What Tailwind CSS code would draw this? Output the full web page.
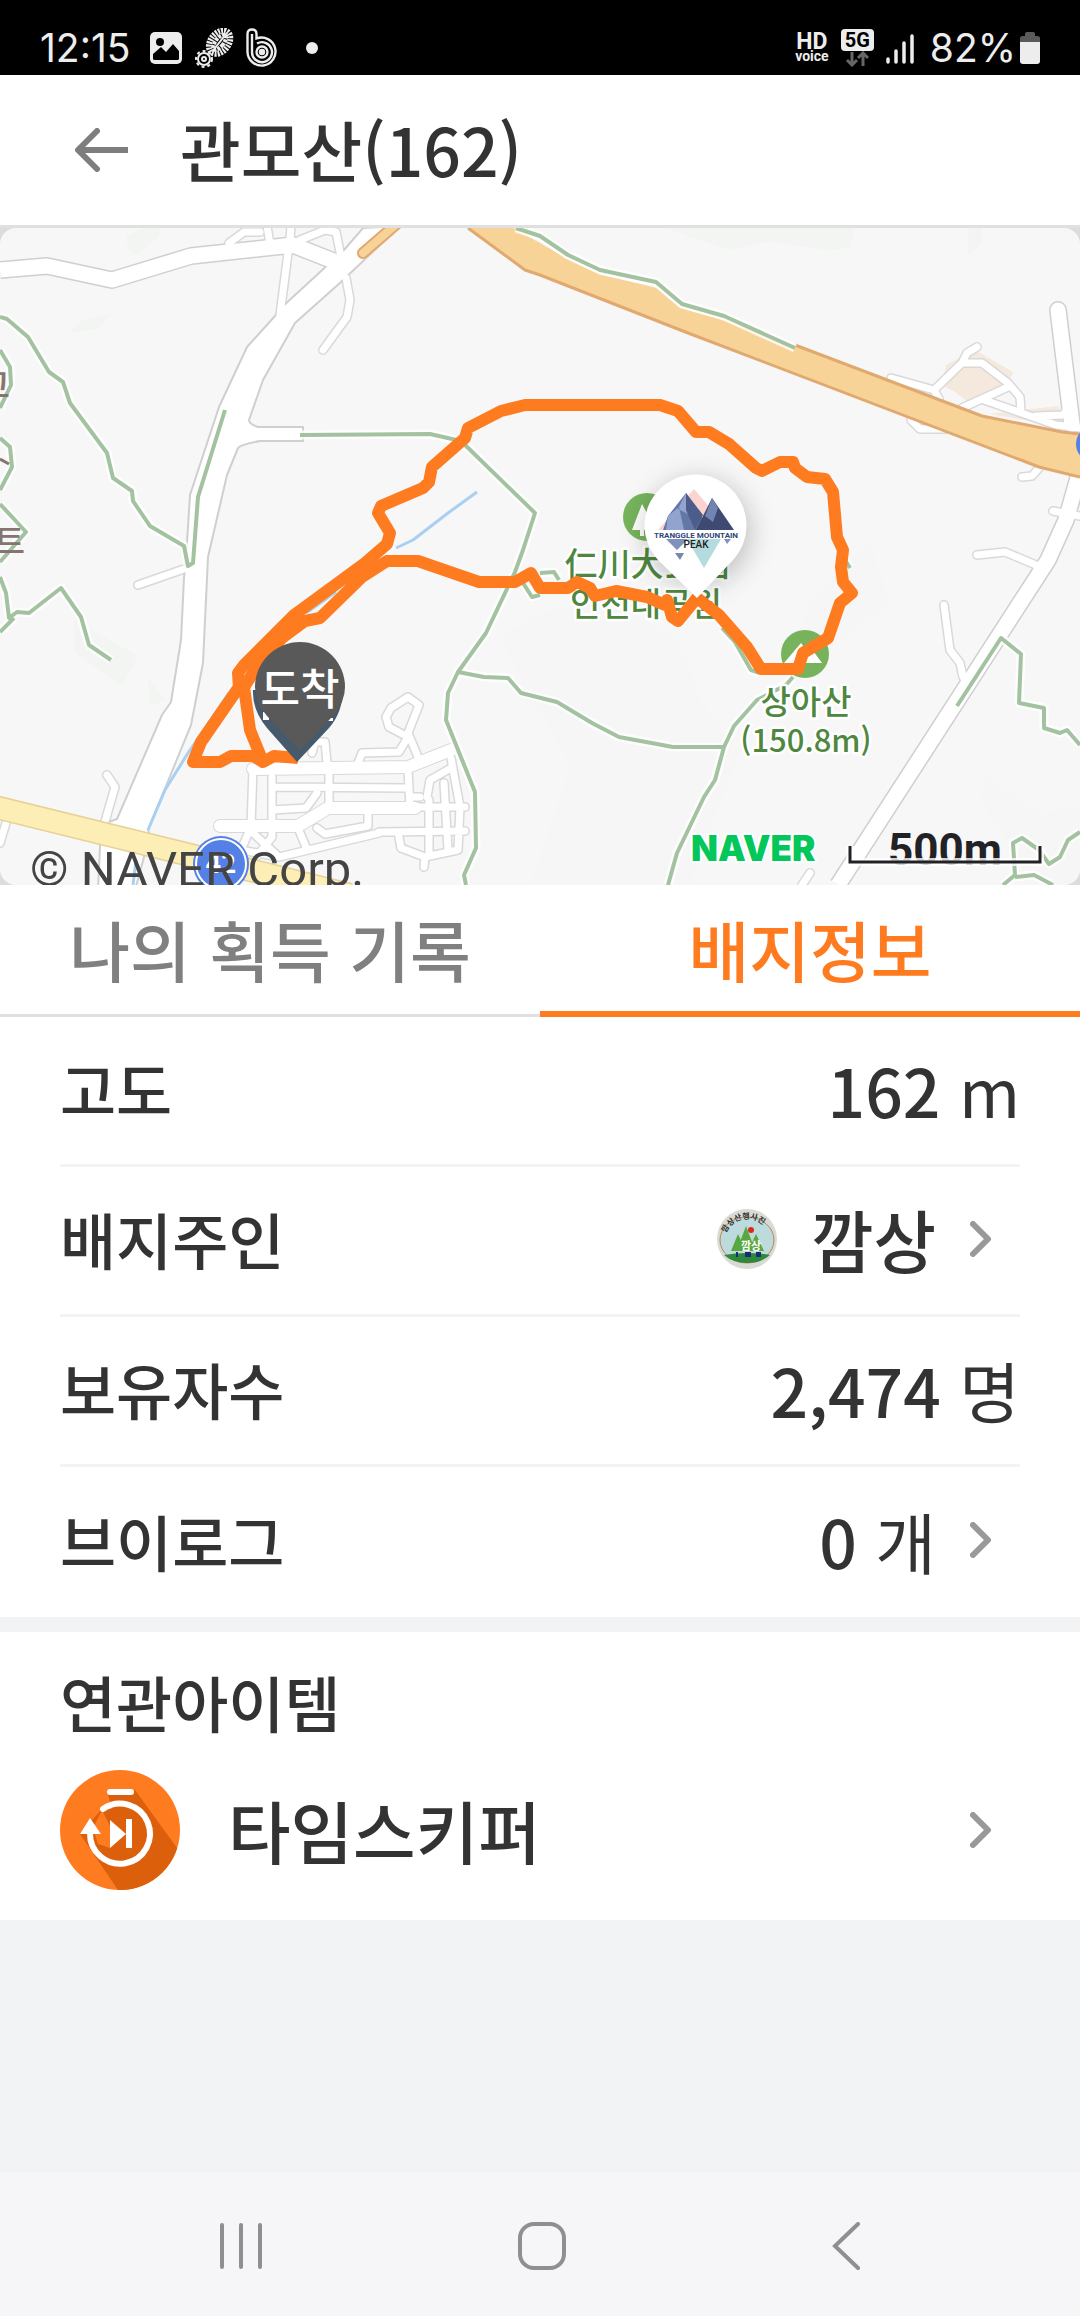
<!DOCTYPE html>
<html lang="ko">
<head>
    <meta charset="UTF-8">
    <meta name="viewport" content="width=device-width, initial-scale=1.0">
    <title>관모산(162)</title>
    <script src="https://cdn.jsdelivr.net/npm/@tailwindcss/browser@4"></script>
</head>
<body class="flex min-h-screen flex-col bg-[#f1f3f5] font-['Noto_Sans_CJK_KR',sans-serif] text-[#333333]">

    <!-- Status bar -->
    <div class="flex h-[75px] items-center justify-between bg-black pt-5 pr-10 pl-10 font-['Inter',sans-serif] text-[39px] leading-none text-[#ededed]">
        <div class="flex items-center">
            <span class="mr-5">12:15</span>
            <svg class="mr-3 h-8 w-8" viewBox="0 0 32 32">
                <rect width="32" height="32" rx="5" fill="#ededed"/>
                <circle cx="10" cy="10" r="4"/>
                <path d="M3 27v-5l8-7 5 5 7-8 6 7v8q0 1-2 1H5q-2 0-2-1z"/>
            </svg>
            <svg class="mr-3 h-10 w-10" viewBox="0 0 40 40" fill="none" stroke="#ededed">
                <g transform="rotate(38 25 15)">
                    <ellipse cx="25" cy="14" rx="9" ry="13" stroke-width="6" stroke-dasharray="2 1"/>
                    <ellipse cx="25" cy="14" rx="4" ry="9" stroke-width="4" stroke-dasharray="3 1"/>
                    <path d="M25 2v24" stroke-width="2"/>
                </g>
                <circle cx="10" cy="31" r="6" stroke-width="2"/>
                <circle cx="10" cy="31" r="8" stroke-width="2" stroke-dasharray="3 3"/>
                <circle cx="10" cy="31" r="2" stroke-width="2"/>
            </svg>
            <svg class="mr-7 h-10 w-8" viewBox="0 0 32 40" fill="none" stroke="#ededed" stroke-width="2.4">
                <path d="M1.500 24V6q0-4.500 4.500-4.500T10.500 6v4.500A14 14 0 1 1 1.500 24z"/>
                <path d="M6 24V6M6 24a10 10 0 1 0 5-8.500"/>
                <circle cx="16" cy="24" r="5.500"/>
                <circle cx="16" cy="24" r="2" fill="#ededed"/>
            </svg>
            <span class="h-3 w-3 rounded-full bg-[#ededed]"></span>
        </div>
        <div class="flex items-center">
            <div class="mr-3 text-center font-['Roboto',sans-serif] font-bold">
                <div class="text-[23px] leading-4">HD</div>
                <div class="text-[14px] leading-3">voice</div>
            </div>
            <div class="mr-3 flex flex-col items-center">
                <span class="rounded-sm bg-[#ededed] px-1 font-['Roboto',sans-serif] text-[20px] leading-[22px] font-bold text-black">5G</span>
                <svg class="h-4 w-6" viewBox="0 0 24 16" fill="none" stroke="#666" stroke-width="3"><path d="M7 1v13M2 9l5 5 5-5M18 15V2M13 7l5-5 5 5"/></svg>
            </div>
            <svg class="mr-4 h-8 w-7" viewBox="0 0 28 32" stroke="#ededed" stroke-width="3.500" stroke-linecap="round"><path d="M2 27v3M10 19v11M18 11v19M26 4v26"/></svg>
            <span class="mr-1">82%</span>
            <svg class="h-8 w-5" viewBox="0 0 20 32">
                <path d="M0 10V6q0-2 3-2h2V2q0-2 2-2h6q2 0 2 2v2h2q3 0 3 2v4z" fill="#5a5a5a"/>
                <path d="M0 10h20v19q0 3-3 3H3q-3 0-3-3z" fill="#ededed"/>
            </svg>
        </div>
    </div>

    <!-- Title bar -->
    <header class="flex h-[153px] items-center border-b-3 border-[#e0e0e0] bg-white pl-[74px]">
        <button type="button" aria-label="뒤로" class="mr-[52px]">
            <svg class="h-11 w-[54px]" viewBox="0 0 54 44" fill="none" stroke="#7e7e7e" stroke-width="6"><path d="M54 22H6"/><path d="M23 3 4 22l19 19" stroke-linecap="round" stroke-linejoin="round"/></svg>
        </button>
        <h1 class="pb-1 text-[66px] leading-none font-medium">관모산(162)</h1>
    </header>

    <!-- Course map -->
    <section aria-label="지도" class="bg-[#dcdcdc]">
        <svg class="block w-full rounded-2xl bg-[#f7f7f7]" viewBox="0 228 1080 657" fill="none" stroke-linejoin="round" font-family="'Noto Sans CJK KR', sans-serif">
            <defs>
                <g id="wide">
                    <path d="M0 270 47 266 112 280 191 256 293 245 336 262"/>
                    <path d="M1078 478 1066 520 1048 560 838 885"/>
                    <path d="M1058 310 1072 424" stroke-linecap="round"/>
                </g>
                <g id="narrow" stroke-linecap="round">
                    <path d="M229 243 244 232H260M267 226l3 18M291 226l-1 14M300 240l25-10 11 2 5 25M288 253l-8 62M346 278l4 22-3 17-24 33"/>
                    <path d="M138 585l46-16M107 775l8 12-11 38M6 823l-6 20"/>
                    <path d="M891 378l43 12 28-27h20l26 20 12 14 1 15M962 363l5-10 10-6M1008 387l-46 21M984 400l72 25 24 3M934 390l5 9M1036 416l27-1 6-8M911 420l9 9h26"/>
                    <path d="M977 555l28-3 31 13M1053 511l27 5M944 605l6 45 10 13 3 14M1022 477l10-1 7-8M802 885l8-12"/>
                    <path d="M253 768l-2 59-10 23 38 7 100-24M253 833l26 24M329 767v40M272 777v60l-14 18M272 787l134 1M408 770l2 37M410 797h10M272 810l34-2 11-15"/>
                    <path d="M427 797l3-17 21-12M451 758l9 49-2 43-33 7-24-9-3-16M415 807h50M379 832l86-1M429 800v53M444 783l4 67M425 857l-1 10"/>
                    <path d="M298 828l8 19M317 828l8 6 43-8v-13M358 763l4-10 37-1 9-15-19-10-3-10 5-9 17-11 11 8-11 28 10 24M327 763l-2-21h-10l-3 11"/>
                </g>
                <g id="village" stroke-linecap="round">
                    <path d="M253 769l155-2 43-17M220 826h78l30-18h87"/>
                </g>
                <g id="trail">
                    <path d="M516 228l24 8 28 19 32 15 56 12 26 22 42 12 71 32"/>
                    <path d="M0 317l7 2 21 18 21 35 14 10 7 21 37 50 6 25 19 13 1 10 17 25 34 20 4 20 5-3 1-13 4-53 27-87"/>
                    <path d="M300 435l130-1 31 7 74 72-12 37-8 22-29 61-28 39-10 21-2 27 29 72 1 56-12 27 2 10"/>
                    <path d="M458 672l26 5 24 1 13 15 36 9 35 21 27 14 54 10h51"/>
                    <path d="M793 677l-7 8-29 15-23 26-10 21-9 33-11 17-27 56-9 32"/>
                    <path d="M722 628l13 14 16 28 9 3"/>
                    <path d="M957 706l44-68 20 16-2 49 25 5v20l16 5 7-3 13 15"/>
                    <path d="M1080 832l-12 8-8 17-11 7-10-14-17-12-9 5 2 32-12 10M1015 877l19-2 19 10"/>
                    <path d="M0 577l6 16 3 25 8-6 12 1 32-25 20 29 8 28 22 15M0 632l14-14"/>
                    <path d="M0 350l10 17 1 18-11 23M0 438l10 9 2 20-12 23M0 504l26 28-26 30"/>
                    <path d="M523 583l9 14 8-2M540 573l14-1 5 8M845 560l5 8"/>
                </g>
                <filter id="soft" x="-50%" y="-50%" width="200%" height="200%"><feGaussianBlur stdDeviation="12"/></filter>
            </defs>

            <!-- Terrain -->
            <path d="M126 236l16-8h20l-4 10-22 17-8-6zM68 334l16-15 26-5-10 14zM665 228h190l-5 20-22 2-60-8-40 8zM968 228h14v15l-14 12zM148 678l18 22-16 6zM74 620l64 36-16 30-48-34z" fill="#f3f5f3"/>
            <path d="M500 640q60-50 120-30t70 60 50 80l-50 135H530l40-120zM780 690l110-90-20-60-60 60zM980 800l20 30 25 55h55v-80l-40 10-55-40z" fill="#f5f6f5"/>
            <path d="M942 385l4-20 29-15 38 22-5 13-23 12-17 5-13-10zM990 414l68-8 14 22z" fill="#f5e8dc"/>

            <!-- Roads -->
            <use href="#wide" stroke="#cfcfcf" stroke-width="18"/>
            <use href="#narrow" stroke="#d9d9d9" stroke-width="10"/>
            <use href="#village" stroke="#d9d9d9" stroke-width="14"/>
            <path d="M363 228 344 250 282 307 275 316 247 347 219 407 190 495 187 543 184 578 181 640 171 702 162 715 117 819 100 825V847L98 890H135L150 835 148 830 191 725 203 663 208 557 227 475 238 448Q240 445 260 441H303V427H258Q249 424 249 420L263 380 295 323 341 282 400 226Z" fill="#fff" stroke="#cfcfcf" stroke-width="2"/>
            <use href="#wide" stroke="#fff" stroke-width="15"/>
            <use href="#narrow" stroke="#fff" stroke-width="7"/>
            <use href="#village" stroke="#fff" stroke-width="12"/>
            <path d="M363 253l37-32" stroke="#e0a970" stroke-width="12" stroke-linecap="round"/>
            <path d="M363 253l37-32" stroke="#f8d397" stroke-width="8" stroke-linecap="round"/>
            <path d="M-5 807l195 48 160 40" stroke="#e6d196" stroke-width="24"/>
            <path d="M-5 807l195 48 160 40" stroke="#fdeeb5" stroke-width="21"/>
            <path d="M468 228l57 42 15 5 148 58 351 134 41 10v-43l-18-2-80-16-187-71-72-25-42-12-24-20-55-13-34-16-28-16-27-15z" fill="#f8d397"/>
            <path d="M468 228l57 42 15 5 148 58 351 134 41 10M795 345l187 71 80 16 18 2" stroke="#e0a970" stroke-width="3"/>

            <!-- Streams and trails -->
            <path d="M477 492l-29 21-35 27-17 8M336 592l-30 21M229 693l-41 60-23 37-17 40M136 860l-3 25" stroke="#a9d0f0" stroke-width="3"/>
            <use href="#trail" stroke="#fff" stroke-opacity=".8" stroke-width="9"/>
            <use href="#trail" stroke="#a3c2a0" stroke-width="4"/>

            <!-- Place names -->
            <g fill="#86756f" text-anchor="end" font-size="34" font-weight="500">
                <text x="10" y="398">고</text>
                <text x="25" y="554">트</text>
            </g>
            <path d="M0 459l9 5" stroke="#86756f" stroke-width="3"/>
            <circle cx="647" cy="517" r="24" fill="#76b35c"/>
            <path d="M642 504l-10 26h8v6h4v-6h12z" fill="#fff"/>
            <circle cx="805" cy="654" r="24" fill="#76b35c"/>
            <path d="M801 643l6 8 4-3 11 15h-38z" fill="#fff"/>
            <g fill="#4f873f" stroke="#fff" stroke-width="5" paint-order="stroke" text-anchor="middle" font-size="33" font-weight="500">
                <text x="647" y="576">仁川大公园</text>
                <text x="646" y="616">인천대공원</text>
                <text x="806" y="714">상아산</text>
                <text x="806" y="752" font-size="31">(150.8m)</text>
            </g>
            <circle cx="1094" cy="444" r="18" fill="#5580e6"/>
            <circle cx="221" cy="864" r="28" fill="#5580e6"/>
            <circle cx="221" cy="864" r="25" stroke="#fff" stroke-width="2"/>
            <text x="221" y="873" fill="#fff" text-anchor="middle" font-size="26" font-weight="700">42</text>

            <!-- Hiking route -->
            <path d="M298 758 274 756 263 762 253 756 231 756 220 762H193L201 742 239 687 238 673 244 665 294 615 365 563 387 544 390 533 378 513 381 506 423 488 429 482 432 467 465 438 468 428 501 411 525 405H660L678 411 696 432H709L729 444 756 468 762 471 780 462H793L795 468 807 477 825 479 833 492 837 537 843 550 841 567 843 582 852 593 840 603 828 638 803 653 798 669H761L747 647 719 615 697 598 678 621 672 617 667 600 665 605 647 597 616 591 595 596 590 588 577 582 568 588H540L531 573 515 582H479L418 561H387L362 577 320 618 305 621 282 638 253 673 244 687 250 730 263 762" stroke="#ff7b20" stroke-width="12"/>
            <path d="M292 624 249 668" stroke="#ff7b20" stroke-width="16"/>

            <!-- Finish pin -->
            <path d="M253 690q-1 20 14 38l30 34 32-34q14-16 14-40z" fill="#465a6c"/>
            <path d="M263 712h6v8h-6zM328 718h5v3h-5z" fill="#fff"/>
            <path d="M300 750l-33-34Q255 702 255 687a45 45 0 0 1 90 0q0 15-12 29z" fill="#595959"/>
            <text x="300" y="705" fill="#fff" text-anchor="middle" font-size="43" font-weight="500">도착</text>

            <!-- Peak badge pin -->
            <circle cx="698" cy="532" r="54" fill="#000" fill-opacity=".2" filter="url(#soft)"/>
            <path d="M697 598l-39-38a51 51 0 1 1 75 0z" fill="#fff"/>
            <path d="M658 530l36-41 35 41z" fill="#fbd3cf"/>
            <path d="M663 530l5-14 11-14 7-9 24 37z" fill="#6478a8"/>
            <path d="M686 493l-8 16 10 5zM668 516l11-9 5 23h-18z" fill="#92a4cd"/>
            <path d="M686 493l17 22-8 15-9-20z" fill="#4c5d8c"/>
            <path d="M696 530l16-32 22 32z" fill="#3e4a72"/>
            <path d="M712 498l-7 18 8 6 5-14z" fill="#7284b2"/>
            <path d="M666 539h22l-11 11zM724 539h7l-4 5z" fill="#7f91bd"/>
            <path d="M675 553h9l-4 7z" fill="#7688b0"/>
            <path d="M687 539h34l-17 29z" fill="#b4dcdf"/>
            <g font-family="Roboto, sans-serif" text-anchor="middle" font-weight="700">
                <text x="696" y="538" font-size="8" fill="#2f4674" stroke="#fff" paint-order="stroke">TRANGGLE MOUNTAIN</text>
                <text x="696" y="548" font-size="10" font-weight="500" fill="#222">PEAK</text>
            </g>

            <!-- Attribution and scale -->
            <text x="30" y="886" font-family="Roboto, sans-serif" font-size="49" fill="#444">© NAVER Corp.</text>
            <text x="691" y="861" font-family="Inter, sans-serif" font-size="35" font-weight="900" fill="#03c75a" stroke="#fff" stroke-width="4" paint-order="stroke">NAVER</text>
            <text x="945" y="865" font-family="Roboto, sans-serif" font-size="44" font-weight="700" text-anchor="middle" fill="#222226">500m</text>
            <path d="M850 846v16h190v-16" stroke="#fff" stroke-opacity=".8" stroke-width="8"/>
            <path d="M850 846v16h190v-16" stroke="#222226" stroke-width="3" stroke-linejoin="miter"/>
        </svg>
    </section>

    <!-- Tabs -->
    <nav role="tablist" class="grid h-[132px] grid-cols-2 bg-white text-[66px] leading-none font-medium">
        <button type="button" role="tab" aria-selected="false" class="border-b-3 border-[#e0e0e0] pb-1 text-[#808080]">나의 획득 기록</button>
        <button type="button" role="tab" aria-selected="true" class="border-b-6 border-[#ff7b20] text-[#ff7b20]">배지정보</button>
    </nav>

    <!-- Badge info -->
    <main>
        <dl class="bg-white px-[60px] text-[61px] leading-none font-medium">
            <div class="flex h-[150px] items-center justify-between border-b-3 border-[#f1f3f5] pb-1">
                <dt>고도</dt>
                <dd class="text-[66px]">162 <span class="font-normal">m</span></dd>
            </div>
            <div class="flex h-[150px] items-center justify-between border-b-3 border-[#f1f3f5] pb-1">
                <dt>배지주인</dt>
                <dd>
                    <a href="#" class="mr-7 flex items-center gap-[34px] text-[68px]">
                        <svg class="h-[60px] w-[60px] rounded-full" viewBox="0 0 60 60">
                            <defs><path id="arc" d="M8 30a22 20 0 0 1 44 0"/></defs>
                            <rect width="60" height="60" fill="#d9dad4"/>
                            <ellipse cx="30" cy="31" rx="27" ry="23" fill="#bddadc" stroke="#b8845a"/>
                            <path d="M7 46q23-4 46 0-9 8-23 8T7 46z" fill="#2e8a3a"/>
                            <path d="M29 17l9 24H20zM21 25l8 17H14zM39 25l8 17H31z" fill="#57a83d"/>
                            <circle cx="34" cy="21" r="3" fill="#d92a20"/>
                            <path d="M19 43h2v5h-2zM28 43h6v5h-6zM39 43h5v5h-5z" fill="#1b2b7a"/>
                            <text font-size="8" font-weight="700" fill="#333"><textPath href="#arc" startOffset="6">깜상산행사진</textPath></text>
                            <text x="34" y="41" text-anchor="middle" font-size="11" font-weight="700" fill="#fff">깜상</text>
                        </svg>
                        <span>깜상</span>
                        <svg class="h-9 w-[22px]" viewBox="0 0 22 36" fill="none" stroke="#999" stroke-width="6" stroke-linecap="round" stroke-linejoin="round"><path d="M3 3l15 15L3 33"/></svg>
                    </a>
                </dd>
            </div>
            <div class="flex h-[150px] items-center justify-between border-b-3 border-[#f1f3f5] pb-1">
                <dt>보유자수</dt>
                <dd class="text-[66px]">2,474 <span class="font-normal">명</span></dd>
            </div>
            <div class="flex h-[150px] items-center justify-between pb-1">
                <dt>브이로그</dt>
                <dd>
                    <a href="#" class="mr-7 flex items-center gap-[34px] text-[66px]">
                        <span>0 <span class="font-normal">개</span></span>
                        <svg class="h-9 w-[22px]" viewBox="0 0 22 36" fill="none" stroke="#999" stroke-width="6" stroke-linecap="round" stroke-linejoin="round"><path d="M3 3l15 15L3 33"/></svg>
                    </a>
                </dd>
            </div>
        </dl>

        <!-- Related items -->
        <section class="mt-[15px] bg-white px-[60px] pb-[30px]">
            <h2 class="flex h-[138px] items-center text-[61px] leading-none font-medium">연관아이템</h2>
            <a href="#" class="mr-7 flex items-center text-[68px] leading-none font-medium">
                <svg class="mr-12 h-[120px] w-[120px] rounded-full" viewBox="0 0 120 120" fill="none">
                    <rect width="120" height="120" fill="#ff7b20"/>
                    <path d="M48 25l27-5 45 62v38H58L20 64l22-25h10z" fill="#dc5f0c"/>
                    <path d="M33 58l9-18 8 16v22L38 74z" fill="#ff7b20"/>
                    <path d="M50 22h21" stroke="#fff" stroke-width="6" stroke-linecap="round"/>
                    <path d="M43 39A30 30 0 1 1 30 63" stroke="#fff" stroke-width="6" stroke-linecap="round"/>
                    <path d="M30 48l11 16H20zM50 50l16 14-16 14zM66 49h6v29h-6z" fill="#fff"/>
                </svg>
                <span class="flex-1">타임스키퍼</span>
                <svg class="h-9 w-[22px]" viewBox="0 0 22 36" fill="none" stroke="#999" stroke-width="6" stroke-linecap="round" stroke-linejoin="round"><path d="M3 3l15 15L3 33"/></svg>
            </a>
        </section>
    </main>

    <!-- System navigation -->
    <footer class="mt-auto grid h-36 grid-cols-3 bg-[#f6f6f8] pt-1 pr-[88px] pl-[92px]">
        <button type="button" aria-label="최근 앱" class="flex items-center justify-center">
            <svg class="h-12 w-12" viewBox="0 0 48 48" stroke="#8f8f8f" stroke-width="4" stroke-linecap="round"><path d="M4 3v42M23 3v42M42 3v42"/></svg>
        </button>
        <button type="button" aria-label="홈" class="flex items-center justify-center">
            <svg class="h-12 w-12" viewBox="0 0 48 48" fill="none" stroke="#8f8f8f" stroke-width="4"><rect x="2" y="2" width="44" height="44" rx="14"/></svg>
        </button>
        <button type="button" aria-label="뒤로 가기" class="flex items-center justify-center">
            <svg class="h-12 w-12" viewBox="0 0 48 48" fill="none" stroke="#8f8f8f" stroke-width="4" stroke-linecap="round"><path d="M40 2 17 24l23 22"/></svg>
        </button>
    </footer>
</body>
</html>
